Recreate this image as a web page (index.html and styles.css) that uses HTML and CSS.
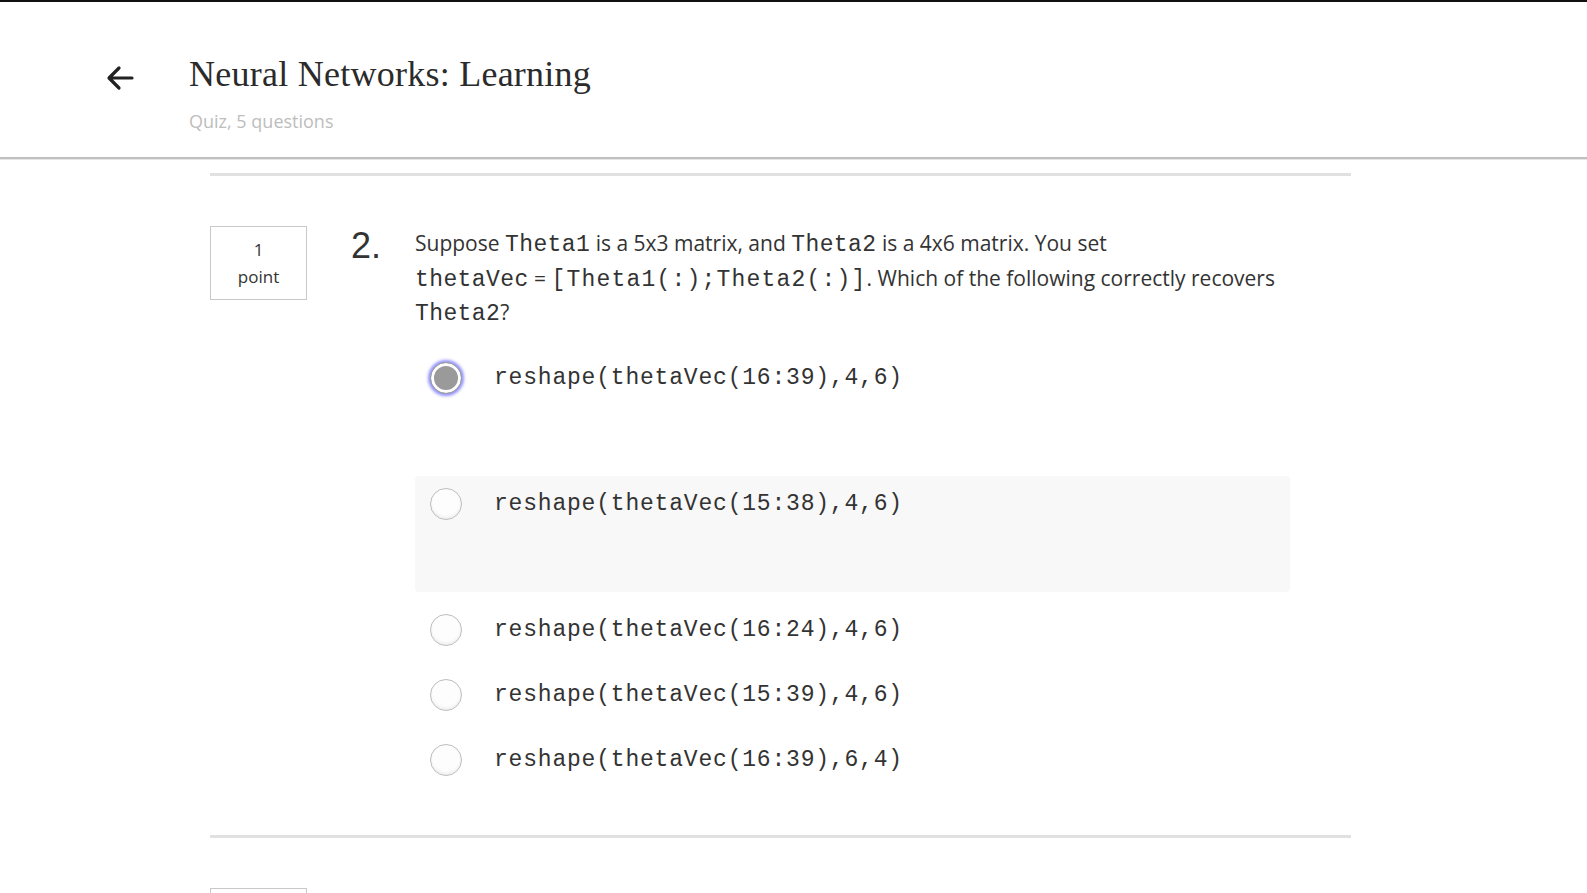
FILE: index.html
```html
<!DOCTYPE html>
<html>
<head>
<meta charset="utf-8">
<link rel="stylesheet" href="styles.css">
</head>
<body>
<header class="header">
  <a class="back" href="#" aria-label="Back">
    <svg width="30" height="30" viewBox="0 0 30 30"><path d="M27 15H5M14 5L4 15L14 25" fill="none" stroke="#222" stroke-width="3.2" stroke-linecap="round" stroke-linejoin="round"/></svg>
  </a>
  <div class="titles">
    <h1 class="title">Neural Networks: Learning</h1>
    <div class="subtitle">Quiz, 5 questions</div>
  </div>
</header>
<main class="content">
  <hr class="sep">
  <section class="question">
    <div class="points"><div>1</div><div>point</div></div>
    <div class="qnum">2.</div>
    <div class="qbody">
      <p class="qtext">Suppose <span class="m">Theta1</span> is a 5x3 matrix, and <span class="m">Theta2</span> is a 4x6 matrix. You set <span class="nowrap"><span class="m">thetaVec</span> = <span class="m wide">[Theta1(:);Theta2(:)]</span></span>. Which of the following correctly recovers <span class="m">Theta2</span>?</p>
      <div class="options">
        <div class="option tall"><span class="radio checked"></span><span class="otext">reshape(thetaVec(16:39),4,6)</span></div>
        <div class="option tall hover"><span class="radio"></span><span class="otext">reshape(thetaVec(15:38),4,6)</span></div>
        <div class="option"><span class="radio"></span><span class="otext">reshape(thetaVec(16:24),4,6)</span></div>
        <div class="option"><span class="radio"></span><span class="otext">reshape(thetaVec(15:39),4,6)</span></div>
        <div class="option"><span class="radio"></span><span class="otext">reshape(thetaVec(16:39),6,4)</span></div>
      </div>
    </div>
  </section>
  <hr class="sep">
  <section class="question next">
    <div class="points empty"></div>
  </section>
</main>
</body>
</html>
```

FILE: styles.css
```css
html, body {
  margin: 0;
  padding: 0;
  background: #fff;
}
body {
  border-top: 2px solid #111;
  font-family: "Open Sans", "Liberation Sans", sans-serif;
  color: #333;
  overflow: hidden;
  height: 891px;
}
.header {
  height: 155px;
  border-bottom: 2px solid #bfbfbf;
  box-shadow: 0 1px 0 #e6e6e6;
  display: flex;
  align-items: flex-start;
  padding-left: 105px;
  box-sizing: content-box;
}
.back {
  display: block;
  width: 30px;
  height: 30px;
  margin-top: 61px;
  margin-right: 54px;
}
.back svg { display: block; }
.titles {
  padding-top: 52px;
}
.title {
  margin: 0;
  font-family: "Liberation Serif", "DejaVu Serif", serif;
  font-weight: normal;
  font-size: 36px;
  line-height: 40px;
  color: #2b2b2b;
  letter-spacing: 0.25px;
}
.subtitle {
  margin-top: 15px;
  font-size: 18px;
  line-height: 24px;
  color: #bdbdbd;
}
.content {
  margin-left: 210px;
  width: 1141px;
}
.sep {
  margin: 14px 0 0 0;
  border: 0;
  height: 3px;
  background: #e1e1e1;
}
.question {
  display: flex;
  align-items: flex-start;
  padding-top: 50px;
  padding-bottom: 34px;
}
.question.next {
  padding-bottom: 0;
}
.points {
  width: 95px;
  height: 72px;
  border: 1px solid #c8c8c8;
  display: flex;
  flex-direction: column;
  align-items: center;
  justify-content: center;
  font-size: 17px;
  line-height: 27px;
  color: #333;
}
.qnum {
  width: 64px;
  margin-left: 44px;
  font-family: "Liberation Sans", Arial, sans-serif;
  font-size: 36px;
  line-height: 40px;
  color: #333;
}
.qbody {
  width: 875px;
}
.qtext {
  margin: 0;
  font-size: 21px;
  line-height: 34.5px;
  color: #333;
}
.nowrap {
  white-space: nowrap;
}
.m {
  font-family: "Liberation Mono", "DejaVu Sans Mono", monospace;
  font-size: 23px;
  line-height: 1;
  letter-spacing: 0.4px;
  color: #333;
}
.m.wide {
  letter-spacing: 1.2px;
}
.options {
  margin-top: 20px;
  display: flex;
  flex-direction: column;
  gap: 10px;
}
.option {
  display: flex;
  align-items: flex-start;
  padding: 12px 0 0 15px;
  height: 55px;
  box-sizing: border-box;
  border-radius: 4px;
}
.option.tall {
  height: 116px;
}
.option.hover {
  background: #f8f8f8;
}
.radio {
  width: 32px;
  height: 32px;
  box-sizing: border-box;
  border-radius: 50%;
  border: 1px solid #bdbdbd;
  background: #fdfdfd;
  box-shadow: inset 0 -2px 3px rgba(0,0,0,0.06);
  flex: none;
}
.radio.checked {
  background: #9a9a9a;
  border: 1px solid #a0a0a0;
  box-shadow: inset 0 0 0 3px #fff, 0 0 3px 2px rgba(110, 110, 255, 0.75);
}
.otext {
  margin-left: 32px;
  font-family: "Liberation Mono", "DejaVu Sans Mono", monospace;
  font-size: 23px;
  letter-spacing: 0.8px;
  line-height: 32px;
  color: #333;
}
```
